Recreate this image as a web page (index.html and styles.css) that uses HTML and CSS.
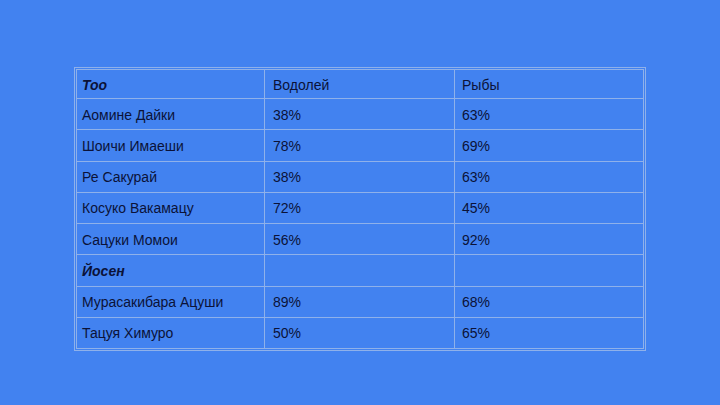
FILE: index.html
```html
<!DOCTYPE html>
<html lang="ru">
<head>
<meta charset="utf-8">
<link rel="stylesheet" href="styles.css">
</head>
<body>
<table class="grid">
  <colgroup><col class="c1"><col class="c2"><col class="c3"></colgroup>
  <tr class="first"><td class="em">Тоо</td><td>Водолей</td><td>Рыбы</td></tr>
  <tr><td>Аомине Дайки</td><td>38%</td><td>63%</td></tr>
  <tr><td>Шоичи Имаеши</td><td>78%</td><td>69%</td></tr>
  <tr><td>Ре Сакурай</td><td>38%</td><td>63%</td></tr>
  <tr><td>Косуко Вакамацу</td><td>72%</td><td>45%</td></tr>
  <tr><td>Сацуки Момои</td><td>56%</td><td>92%</td></tr>
  <tr><td class="em">Йосен</td><td></td><td></td></tr>
  <tr><td>Мурасакибара Ацуши</td><td>89%</td><td>68%</td></tr>
  <tr><td>Тацуя Химуро</td><td>50%</td><td>65%</td></tr>
</table>
</body>
</html>
```
FILE: styles.css
```css
html, body {
  margin: 0;
  padding: 0;
  background: #4282f0;
  width: 720px;
  height: 405px;
  overflow: hidden;
}
body {
  padding: 67px 0 0 74px;
  box-sizing: border-box;
  font-family: "Liberation Sans", Arial, sans-serif;
  font-size: 14px;
  color: #0b1238;
}
.grid {
  border-collapse: separate;
  border-spacing: 0;
  border: 1px solid #8fb1ea;
  padding: 1px;
  width: 572px;
  table-layout: fixed;
}
.c1 { width: 189px; }
.c2 { width: 190px; }
.c3 { width: 189px; }
.grid td {
  height: 31.25px;
  padding: 1px 0 0 7px;
  border-right: 1px solid #8fb1ea;
  border-bottom: 1px solid #8fb1ea;
  vertical-align: middle;
  box-sizing: border-box;
  line-height: 16px;
}
.grid td:first-child {
  border-left: 1px solid #8fb1ea;
  padding-left: 5px;
}
.grid td:nth-child(2) { padding-left: 8px; }
.grid .first td {
  border-top: 1px solid #8fb1ea;
  height: 30px;
}
.grid td.em {
  font-weight: bold;
  font-style: italic;
}
```
